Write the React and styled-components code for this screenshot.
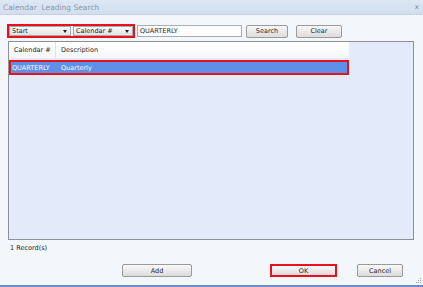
import React from "react";
import styled, { createGlobalStyle } from "styled-components";

const GlobalStyle = createGlobalStyle`
  html, body { margin: 0; padding: 0; }
  body {
    width: 423px;
    height: 287px;
    overflow: hidden;
    font-family: "DejaVu Sans", "Liberation Sans", sans-serif;
    font-size: 7px;
    color: #1e1e1e;
  }
`;

const Window = styled.div`
  width: 423px;
  height: 287px;
  box-sizing: border-box;
  display: flex;
  flex-direction: column;
  background: #f3f6fb;
  border-bottom: 2px solid #6b8fc4;
  position: relative;
`;

const TitleBar = styled.div`
  height: 14px;
  display: flex;
  align-items: center;
  justify-content: space-between;
  padding: 0 4px 0 3px;
  background: linear-gradient(#dde7f5, #d2deef);
  border-bottom: 1px solid #c3d1e6;
  color: #8b98ab;
  font-size: 7.5px;
`;

const Close = styled.span`
  font-size: 7px;
  color: #7d8796;
`;

const Body = styled.div`
  flex: 1;
  display: flex;
  flex-direction: column;
  padding: 9px 9px 0 8px;
`;

const Toolbar = styled.div`
  display: flex;
  align-items: center;
  height: 14px;
`;

const Highlight = styled.div`
  display: flex;
  gap: 2px;
  border: 2px solid #e8121b;
  margin-left: -1px;
`;

const Select = styled.div`
  width: ${p => p.$w}px;
  height: 10px;
  box-sizing: border-box;
  display: flex;
  align-items: center;
  justify-content: space-between;
  padding: 0 3px 0 2px;
  background: linear-gradient(#fafafa, #e2e2e2);
  border: 1px solid #a9a9a9;
  font-size: 6.5px;
`;

const Caret = styled.span`
  width: 0;
  height: 0;
  border-left: 2px solid transparent;
  border-right: 2px solid transparent;
  border-top: 3px solid #222;
`;

const TextInput = styled.div`
  width: 105px;
  height: 12px;
  box-sizing: border-box;
  margin-left: 2px;
  border: 1px solid #a7adb8;
  background: #fff;
  padding: 0 2px;
  display: flex;
  align-items: center;
  font-size: 6.5px;
`;

const Button = styled.div`
  width: ${p => p.$w}px;
  height: 13px;
  box-sizing: border-box;
  margin-left: ${p => p.$ml || 0}px;
  border: ${p => (p.$hl ? "2px solid #e8121b" : "1px solid #9a9a9a")};
  border-radius: ${p => (p.$hl ? 0 : 2)}px;
  background: linear-gradient(#f8f8f8, #dcdcdc);
  display: flex;
  align-items: center;
  justify-content: center;
  font-size: 6.5px;
  color: #2a2a2a;
`;

const ListPanel = styled.div`
  margin-top: 3px;
  height: 199px;
  box-sizing: border-box;
  border: 1px solid #8c9099;
  background: #e3ebfa;
  display: flex;
  flex-direction: column;
`;

const HeaderRow = styled.div`
  width: 340px;
  height: 16px;
  display: flex;
  align-items: center;
  background: linear-gradient(#ffffff, #f4f6f9);
  border-bottom: 1px solid #e8ebf0;
`;

const HeaderCell = styled.div`
  width: ${p => p.$w}px;
  box-sizing: border-box;
  padding-left: 5px;
  height: 100%;
  display: flex;
  align-items: center;
  border-right: ${p => (p.$sep ? "1px solid #dde2ea" : "none")};
  font-size: 6.5px;
`;

const DataRow = styled.div`
  width: 340px;
  height: 15px;
  box-sizing: border-box;
  margin-top: 1px;
  display: flex;
  align-items: center;
  background: #5f8fe9;
  border: 2px solid #e8121b;
  color: #fff;
`;

const DataCell = styled.div`
  width: ${p => p.$w}px;
  padding-left: ${p => p.$pl}px;
  font-size: 6.5px;
`;

const Status = styled.div`
  margin-top: 2px;
  height: 12px;
  display: flex;
  align-items: center;
  padding-left: 2px;
  font-size: 6.5px;
`;

const Footer = styled.div`
  margin-top: 10px;
  display: flex;
  align-items: center;
`;

const Grip = styled.div`
  position: absolute;
  right: 2px;
  bottom: 2px;
  display: grid;
  grid-template-columns: repeat(3, 1px);
  gap: 1px;
`;

const Dot = styled.span`
  width: 1px;
  height: 1px;
  background: ${p => (p.$on ? "#9aa5b5" : "transparent")};
`;

export default function App() {
  const grip = [0, 0, 1, 0, 1, 1, 1, 1, 1];
  return (
    <>
      <GlobalStyle />
      <Window>
        <TitleBar>
          <span>Calendar&nbsp; Leading Search</span>
          <Close>x</Close>
        </TitleBar>
        <Body>
          <Toolbar>
            <Highlight>
              <Select $w={62}>
                <span>Start</span>
                <Caret />
              </Select>
              <Select $w={60}>
                <span>Calendar #</span>
                <Caret />
              </Select>
            </Highlight>
            <TextInput>QUARTERLY</TextInput>
            <Button $w={42} $ml={4}>Search</Button>
            <Button $w={46} $ml={8}>Clear</Button>
          </Toolbar>
          <ListPanel>
            <HeaderRow>
              <HeaderCell $w={47} $sep>Calendar #</HeaderCell>
              <HeaderCell $w={100}>Description</HeaderCell>
            </HeaderRow>
            <DataRow>
              <DataCell $w={47} $pl={1}>QUARTERLY</DataCell>
              <DataCell $w={100} $pl={2}>Quarterly</DataCell>
            </DataRow>
          </ListPanel>
          <Status>1 Record(s)</Status>
          <Footer>
            <Button $w={70} $ml={114}>Add</Button>
            <Button $w={67} $ml={78} $hl>OK</Button>
            <Button $w={46} $ml={20}>Cancel</Button>
          </Footer>
        </Body>
        <Grip>
          {grip.map((on, i) => (
            <Dot key={i} $on={on} />
          ))}
        </Grip>
      </Window>
    </>
  );
}
